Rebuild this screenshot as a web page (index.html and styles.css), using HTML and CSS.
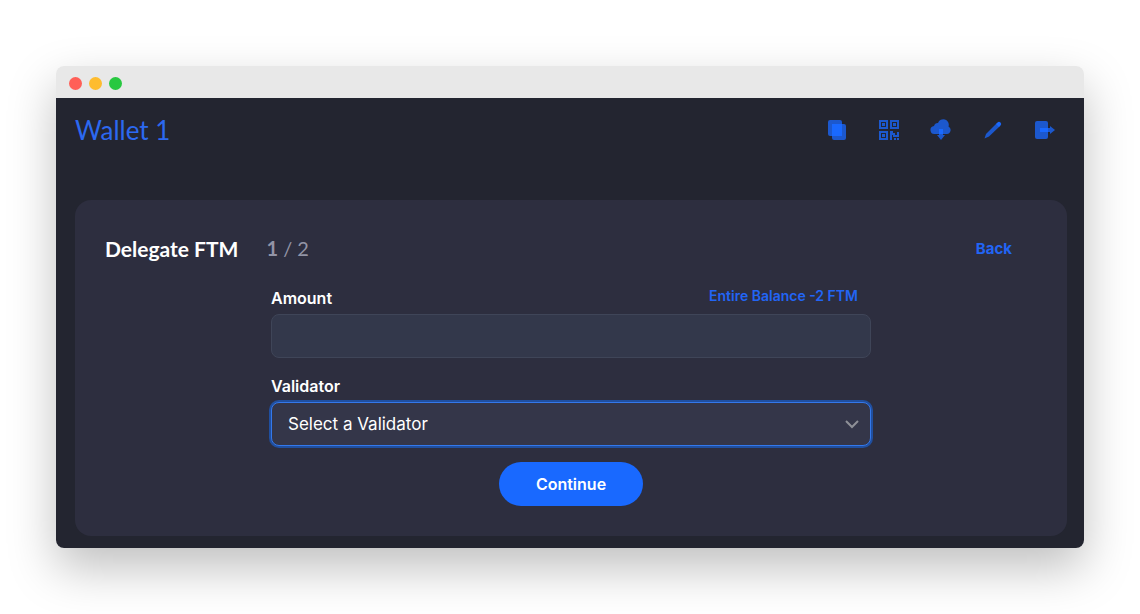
FILE: index.html
```html
<!DOCTYPE html>
<html lang="en">
<head>
  <meta charset="UTF-8">
  <meta name="viewport" content="width=device-width, initial-scale=1.0">
  <title>Delegate FTM - Wallet 1</title>
  <link rel="stylesheet" href="styles.css">
</head>
<body>
  <div class="window">
    <div class="titlebar">
      <span class="dot red"></span>
      <span class="dot yellow"></span>
      <span class="dot green"></span>
    </div>

    <div class="content">
      <header class="wallet-header">
        <h1>Wallet 1</h1>
        <nav class="actions">
          <button type="button" aria-label="Copy address">
            <svg viewBox="0 0 24 24">
              <rect class="dim" x="3" y="2" width="14" height="16" rx="2"/>
              <rect class="dim" x="7" y="6" width="14" height="16" rx="2"/>
              <rect x="7" y="6" width="10" height="12"/>
            </svg>
          </button>
          <button type="button" aria-label="QR code">
            <svg viewBox="0 0 24 24">
              <path class="qr" d="M3 3h7v7H3zM14 3h7v7h-7zM3 14h7v7H3z"/>
              <path class="dim" d="M5 5h3v3H5zM16 5h3v3h-3zM5 16h3v3H5zM13 13h3v2h2v2h2v-3h2v5h-6v-2h-1v5h-2zM17 20h2v2h-2zM20 20h2v2h-2z"/>
            </svg>
          </button>
          <button type="button" aria-label="Download keystore">
            <svg viewBox="0 0 24 24">
              <path class="dim" d="M6 16a4 4 0 0 1-1-8 4 4 0 0 1 4-3 5.500 5.500 0 0 1 10.500 3.500A4 4 0 0 1 18 16z"/>
              <path class="dim" d="M10 15h4v2h2l-4 5-4-5h2z"/>
              <path d="M10 11h4v5h-4z"/>
            </svg>
          </button>
          <button type="button" aria-label="Rename wallet">
            <svg viewBox="0 0 24 24">
              <path class="dim" d="M15.500 5.500l3 3L8 18.500 3.500 20.500l1.500-4.500z"/>
              <path d="M16.500 4.500a2.100 2.100 0 0 1 3 3L18 9l-3-3z"/>
            </svg>
          </button>
          <button type="button" aria-label="Log out">
            <svg viewBox="0 0 24 24">
              <rect class="dim" x="2" y="3" width="13" height="18" rx="2"/>
              <path class="dim" d="M14 10h3V8l5 4-5 4v-2h-3z"/>
              <path d="M7 10h8v4H7z"/>
            </svg>
          </button>
        </nav>
      </header>

      <main class="card">
        <div class="card-header">
          <h2>Delegate FTM</h2>
          <span class="step"><b>1</b> / 2</span>
          <a href="#" class="back">Back</a>
        </div>

        <form class="form">
          <div class="field">
            <div class="label-row">
              <label for="amount">Amount</label>
              <button type="button" class="entire">Entire Balance -2 FTM</button>
            </div>
            <input type="text" id="amount" class="control">
          </div>
          <div class="field">
            <div class="label-row">
              <label for="validator">Validator</label>
            </div>
            <div class="select-wrap">
              <select id="validator" class="control active">
                <option>Select a Validator</option>
              </select>
              <svg class="chevron" viewBox="0 0 16 16"><path d="M2 5l6 6 6-6"/></svg>
            </div>
          </div>
          <button type="submit" class="submit">Continue</button>
        </form>
      </main>
    </div>
  </div>
</body>
</html>
```
FILE: styles.css
```css
* {
  box-sizing: border-box;
}
body {
  margin: 0;
  padding: 66px 56px;
  background-color: #fff;
  color: #fff;
  font-family: Inter, "Liberation Sans", sans-serif;
}
h1, h2 {
  margin: 0;
}
button {
  padding: 0;
  border: 0;
  background: none;
  font-family: inherit;
  cursor: pointer;
}
.window {
  border-radius: 8px;
  box-shadow: 0 20px 48px rgba(0, 0, 0, 0.25);
}
.titlebar {
  display: flex;
  align-items: center;
  gap: 7px;
  height: 32px;
  padding: 2px 13px 0;
  border-radius: 8px 8px 0 0;
  background-color: #e8e8e8;
}
.dot {
  width: 13px;
  height: 13px;
  border-radius: 50%;
}
.dot.red {
  background-color: #ff5f57;
}
.dot.yellow {
  background-color: #febc2e;
}
.dot.green {
  background-color: #28c840;
}
.content {
  padding: 0 17px 12px 19px;
  border-radius: 0 0 8px 8px;
  background-color: #232530;
}
.wallet-header {
  display: flex;
  align-items: center;
  justify-content: space-between;
  height: 64px;
  margin-bottom: 38px;
  padding-right: 10px;
}
.wallet-header h1 {
  color: #2c69f0;
  font-family: Lato, sans-serif;
  font-size: 26px;
  font-weight: 400;
}
.actions {
  display: flex;
  gap: 28px;
}
.actions button {
  width: 24px;
  height: 24px;
}
.actions svg {
  display: block;
  fill: #1969ff;
}
.actions .dim {
  fill: #1c58cd;
}
.actions .qr {
  fill: none;
  stroke: #1c58cd;
  stroke-width: 2;
}
.card {
  padding: 30px;
  border-radius: 16px;
  background-color: #2d2e3f;
}
.card-header {
  display: flex;
  align-items: center;
  height: 36px;
  margin-bottom: 20px;
  padding-right: 25px;
}
.card-header h2 {
  font-family: Lato, sans-serif;
  font-size: 21px;
  font-weight: 700;
}
.step {
  margin-left: 28px;
  color: #9294a6;
  font-family: Lato, sans-serif;
  font-size: 20px;
}
.back {
  margin-left: auto;
  color: #2265f5;
  font-size: 15px;
  font-weight: 700;
  text-decoration: none;
}
.form {
  display: flex;
  flex-direction: column;
  gap: 16px;
  max-width: 600px;
  margin: 0 auto;
}
.label-row {
  display: flex;
  justify-content: space-between;
  height: 24px;
  margin-bottom: 4px;
  padding-right: 13px;
}
.label-row label {
  font-size: 16px;
  font-weight: 600;
  line-height: 24px;
}
.entire {
  color: #2265f5;
  font-size: 14px;
  font-weight: 600;
  line-height: 20px;
  align-self: flex-start;
}
.control {
  display: block;
  width: 100%;
  height: 44px;
  padding: 0 16px;
  border: 1px solid #3f4558;
  border-radius: 8px;
  outline: none;
  appearance: none;
  background-color: #33384b;
  color: #fff;
  font-family: inherit;
  font-size: 17px;
}
.control.active {
  border-color: #3478ea;
  box-shadow: 0 0 0 2px #204f9f;
  background-color: #343649;
}
.select-wrap {
  position: relative;
}
.chevron {
  position: absolute;
  top: 14px;
  right: 11px;
  width: 16px;
  height: 16px;
  fill: none;
  stroke: #8e9097;
  stroke-width: 2;
  pointer-events: none;
}
.submit {
  align-self: center;
  width: 144px;
  height: 44px;
  border-radius: 22px;
  background-color: #1969ff;
  color: #fff;
  font-size: 16px;
  font-weight: 600;
}
```
